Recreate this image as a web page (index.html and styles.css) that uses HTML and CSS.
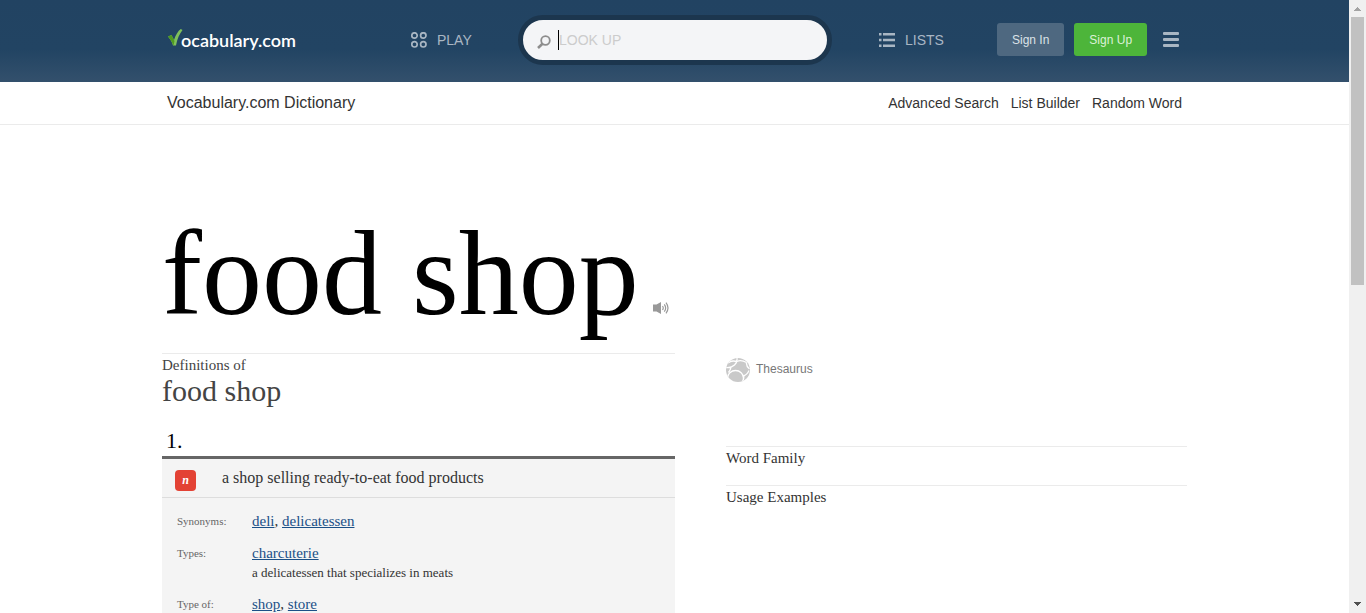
FILE: index.html
```html
<!DOCTYPE html>
<html lang="en">
<head>
<meta charset="utf-8">
<title>food shop - Vocabulary.com Dictionary</title>
<link rel="stylesheet" href="styles.css">
</head>
<body>
<div class="page">
  <header class="topbar">
    <div class="wrap topbar-row">
      <a class="logo" href="#">
        <svg class="logo-check" width="15" height="19" viewBox="0 0 15 19"><path d="M0 8.500L3.500 7L6 12C7.500 7 10 3 12.800 1L14.500 2C11.500 6 9 11 8 17.500H5C4 14 2.500 11.500 0 8.500Z" fill="#7fc15a"/><path d="M0 8.500L3.500 7L6.500 13L5.500 17.500C4 14 2.500 11.500 0 8.500Z" fill="#4f9a1f"/></svg>
        <span class="logo-text">ocabulary.com</span>
      </a>
      <a class="nav-link" href="#">
        <svg width="16" height="16" viewBox="0 0 16 16" fill="none" stroke="currentColor" stroke-width="1.700"><circle cx="3.500" cy="3.500" r="2.700"/><circle cx="12.300" cy="3.500" r="2.700"/><circle cx="3.500" cy="12.300" r="2.700"/><circle cx="12.300" cy="12.300" r="2.700"/></svg>
        <span>PLAY</span>
      </a>
      <form class="search">
        <svg width="14" height="14" viewBox="0 0 14 14" fill="none" stroke="#8d8d8d"><circle cx="8.500" cy="5.500" r="4.300" stroke-width="1.800"/><path d="M5.500 8.700L1 13" stroke-width="2.600"/></svg>
        <span class="caret"></span>
        <input class="search-input" type="text" placeholder="LOOK UP" aria-label="Look up">
      </form>
      <a class="nav-link nav-lists" href="#">
        <svg width="16" height="14" viewBox="0 0 16 14" fill="currentColor"><path d="M0 0h2.500v2.500H0zM4 0h12v2.500H4zM0 5.700h2.500v2.500H0zM4 5.700h12v2.500H4zM0 11.400h2.500v2.500H0zM4 11.400h12v2.500H4z"/></svg>
        <span>LISTS</span>
      </a>
      <div class="account">
        <button class="btn btn-in" type="button">Sign In</button>
        <button class="btn btn-up" type="button">Sign Up</button>
        <button class="menu" type="button" aria-label="Menu"><svg width="16" height="15" viewBox="0 0 16 15" fill="currentColor"><rect width="16" height="3" rx="1"/><rect y="6" width="16" height="3" rx="1"/><rect y="12" width="16" height="3" rx="1"/></svg></button>
      </div>
    </div>
  </header>
  <nav class="subbar">
    <div class="wrap subbar-row">
      <a class="section-name" href="#">Vocabulary.com Dictionary</a>
      <div class="sub-links">
        <a href="#">Advanced Search</a>
        <a href="#">List Builder</a>
        <a href="#">Random Word</a>
      </div>
    </div>
  </nav>
  <main class="wrap columns">
    <section class="entry">
      <div class="headword">
        <h1>food shop</h1>
        <button class="audio" type="button" aria-label="Listen"><svg width="16" height="12" viewBox="0 0 16 12"><path d="M0 2.500h3.500L8 0v12L3.500 9.500H0z" fill="#999"/><path d="M9.500 4q1.500 2 0 4M11.300 2.300q2.700 3.700 0 7.400M13 .7q4 5.300 0 10.600" fill="none" stroke="#999" stroke-width="1.200"/></svg></button>
      </div>
      <h2 class="definitions"><span class="definitions-label">Definitions of</span>food shop</h2>
      <div class="number">1.</div>
      <div class="sense">
        <h3 class="meaning"><a class="pos" href="#" title="noun">n</a>a shop selling ready-to-eat food products</h3>
        <dl class="relations">
          <dt>Synonyms:</dt>
          <dd><a href="#">deli</a>, <a href="#">delicatessen</a></dd>
          <dt>Types:</dt>
          <dd><a href="#">charcuterie</a><div class="gloss">a delicatessen that specializes in meats</div></dd>
          <dt>Type of:</dt>
          <dd><a href="#">shop</a>, <a href="#">store</a></dd>
        </dl>
      </div>
    </section>
    <aside class="side">
      <a class="thesaurus" href="#">
        <svg width="24" height="24" viewBox="0 0 24 24"><defs><clipPath id="ball"><circle cx="12" cy="12" r="12"/></clipPath></defs><g clip-path="url(#ball)"><rect width="24" height="24" fill="#c9c9c9"/><g fill="none" stroke="#fff" stroke-width="1.300"><ellipse cx="9.500" cy="20" rx="8" ry="7.500"/><path d="M0 9.500Q5.500 10 8.500 7Q11.500 4.500 11 0M2 5Q5 2 11 3.500M5 9.200Q4.500 12 2.500 14.500M11 3.500Q15 1.500 20.500 4.500M20.500 4.500Q20 8 23.500 11M17.200 18Q21 17 23 12.500M17.500 21L18 17.500"/></g></g></svg>
        <span>Thesaurus</span>
      </a>
      <h3 class="side-head">Word Family</h3>
      <h3 class="side-head">Usage Examples</h3>
    </aside>
  </main>
</div>
<div class="scrollbar" aria-hidden="true">
  <svg width="7" height="4" viewBox="0 0 7 4" fill="#a3a3a3"><path d="M3 0h1v1h1v1h1v1h1v1H0V3h1V2h1V1h1z"/></svg>
  <span class="thumb"></span>
  <svg width="7" height="4" viewBox="0 0 7 4" fill="#505050"><path d="M0 0h7v1H6v1H5v1H4v1H3V3H2V2H1V1H0z"/></svg>
</div>
</body>
</html>
```
FILE: styles.css
```css
* { box-sizing: border-box; }
body {
  margin: 0;
  display: flex;
  height: 100vh;
  overflow: hidden;
  background: #fff;
  color: #333;
  font-family: "Liberation Serif", "Times New Roman", serif;
}
a { color: inherit; text-decoration: none; }
h1, h2, h3, dl, dd { margin: 0; font-weight: normal; }
button { border: 0; padding: 0; background: none; cursor: pointer; }
svg { display: block; flex: none; }

.page { flex: 1; min-width: 0; overflow: hidden; }
.wrap { max-width: 1025px; margin: 0 auto; }

.topbar {
  background: linear-gradient(#224362, #224463 60%, #33506c);
  color: #a9b6c3;
  font-family: "Liberation Sans", Arial, sans-serif;
}
.topbar-row {
  display: grid;
  grid-template-columns: 243px 107px 1fr 165px 190px;
  align-items: center;
  height: 82px;
  padding: 0 0 3px 6px;
}
.logo { display: flex; align-items: center; color: #fff; }
.logo-check { margin-bottom: 4px; }
.logo-text {
  margin-left: -2px;
  font: 600 18px/24px Lato, sans-serif;
}
.nav-link { display: flex; align-items: center; gap: 10px; font-size: 14px; }
.nav-lists { padding-left: 47px; }
.search {
  display: flex;
  align-items: center;
  height: 50px;
  padding: 0 14px;
  border: 5px solid #1c364e;
  border-radius: 25px;
  background: #f4f5f7;
}
.search svg { margin-top: 4px; }
.caret { width: 1px; height: 20px; margin-left: 7px; background: #000; }
.search-input {
  flex: 1;
  min-width: 0;
  padding: 0;
  border: 0;
  outline: 0;
  background: none;
  font: 14px "Liberation Sans", Arial, sans-serif;
}
.search-input::placeholder { color: #ccc; opacity: 1; }
.account { display: flex; align-items: center; gap: 10px; }
.btn {
  height: 33px;
  padding: 0 15px;
  border-radius: 3px;
  font: 12px "Liberation Sans", Arial, sans-serif;
}
.btn-in { background: #4e6880; color: #dce2e7; }
.btn-up { background: #4db53a; color: #dcf1d8; }
.menu { margin-left: 6px; color: #a9b6c3; }

.subbar {
  border-bottom: 1px solid #ebebeb;
  font-family: "Liberation Sans", Arial, sans-serif;
}
.subbar-row {
  display: flex;
  justify-content: space-between;
  align-items: center;
  height: 42px;
  padding: 0 5px 1px;
}
.section-name { font-size: 16px; }
.sub-links { display: flex; gap: 12px; font-size: 14px; }

.columns {
  display: grid;
  grid-template-columns: 513fr 461fr;
  column-gap: 51px;
}
.headword {
  display: flex;
  align-items: flex-end;
  gap: 14px;
  padding: 81px 0 11px;
  border-bottom: 1px solid #ebebeb;
}
.headword h1 { color: #000; font-size: 120px; line-height: 136px; }
.audio { margin-bottom: 28px; }
.definitions { padding-top: 1px; color: #444; font-size: 30px; line-height: 32px; }
.definitions-label { display: block; font-size: 15px; line-height: 20px; }
.number { padding: 22px 0 3px 4px; color: #000; font-size: 22px; line-height: 24px; }
.sense { border-top: 3px solid #666; background: #f4f4f4; }
.meaning {
  display: flex;
  align-items: center;
  gap: 26px;
  height: 39px;
  padding: 0 13px;
  border-bottom: 1px solid #ddd;
  font-size: 16px;
}
.pos {
  width: 21px;
  height: 21px;
  margin-top: 4px;
  border-radius: 4px;
  background: #e34234;
  color: #fff;
  font: italic bold 12px/20px "Liberation Serif", serif;
  text-align: center;
}
.relations {
  display: grid;
  grid-template-columns: 75px 1fr;
  row-gap: 12px;
  padding: 13px 15px;
  font-size: 15px;
  line-height: 20px;
}
.relations dt { color: #666; font-size: 11px; }
.relations dd a { color: #1b5087; text-decoration: underline; }
.gloss { font-size: 13px; line-height: 19px; }

.side { padding-top: 233px; }
.thesaurus {
  display: flex;
  gap: 6px;
  height: 88px;
  color: #777;
  font: 12px/22px "Liberation Sans", Arial, sans-serif;
}
.side-head {
  height: 39px;
  border-top: 1px solid #ebebeb;
  font-size: 15px;
  line-height: 23px;
}

.scrollbar {
  display: flex;
  flex-direction: column;
  justify-content: space-between;
  align-items: center;
  width: 17px;
  padding: 7px 0;
  background: #f0f0f0;
}
.thumb { width: 13px; height: 268px; margin: 6px 0 auto; background: #c1c1c1; }
```
